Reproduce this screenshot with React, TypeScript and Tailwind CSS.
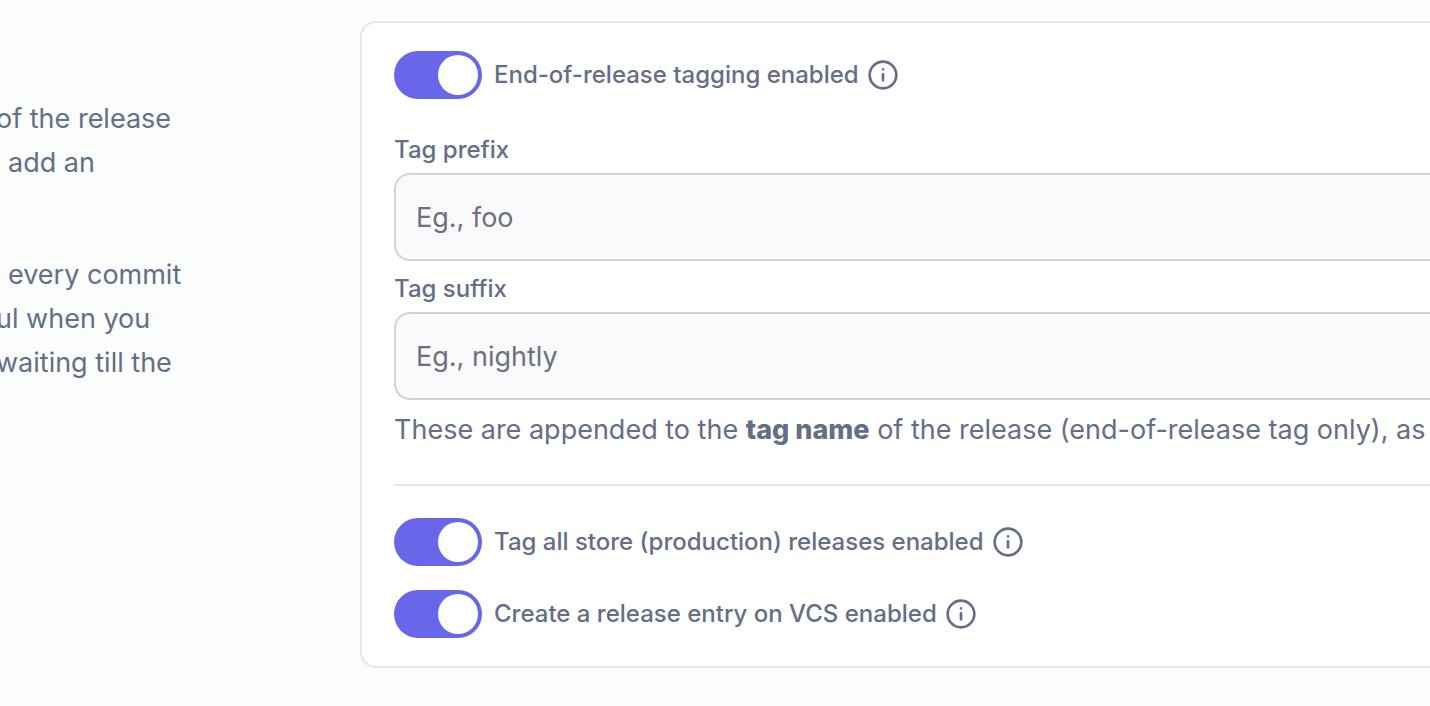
import { useId, type ReactNode } from "react";

function InfoIcon() {
  return (
    <svg viewBox="0 0 24 24" className="size-8" fill="none" stroke="currentColor" strokeWidth={2} strokeLinecap="round" strokeLinejoin="round" aria-hidden="true">
      <circle cx="12" cy="12" r="10" />
      <path d="M12 11.5v4.5M12 7.76l.01-.011" />
    </svg>
  );
}

function Toggle({ children }: { children: ReactNode }) {
  const id = useId();
  return (
    <div className="flex items-center">
      <input
        id={id}
        type="checkbox"
        defaultChecked
        className="flex h-12 w-22 shrink-0 cursor-pointer appearance-none items-center rounded-full bg-gray-200 p-1 before:size-10 before:rounded-full before:bg-white before:transition-transform checked:bg-[#6866e9] checked:before:translate-x-10"
      />
      <label htmlFor={id} className="mr-2 ml-3 text-2xl font-medium whitespace-nowrap">
        {children}
      </label>
      <button type="button" aria-label="More information">
        <InfoIcon />
      </button>
    </div>
  );
}

function Field({ label, placeholder }: { label: string; placeholder: string }) {
  const id = useId();
  return (
    <div className="flex flex-col gap-[7px]">
      <label htmlFor={id} className="text-2xl leading-8 font-medium">
        {label}
      </label>
      <input
        id={id}
        type="text"
        placeholder={placeholder}
        className="h-22 w-full rounded-l-2xl border-2 border-r-0 border-[#d1d3dc] bg-[#f9fafc] px-5 text-[27px] placeholder:text-[#6c717d]"
      />
    </div>
  );
}

export default function App() {
  return (
    <main className="flex min-h-screen items-start overflow-hidden bg-[#fbfdfc] font-['Inter',sans-serif] text-[#656e87]">
      <aside className="w-90 shrink-0 pt-[97px] text-[27px] leading-11 whitespace-nowrap">
        <p className="-ml-1">
          <span className="block">of the release</span>
          <span className="block pl-3">add an</span>
        </p>
        <p className="mt-17 -ml-1">
          <span className="block pl-3">every commit</span>
          <span className="block">ul when you</span>
          <span className="block">waiting till the</span>
        </p>
      </aside>
      <section className="mt-[21px] min-w-0 flex-1 overflow-hidden rounded-l-2xl border-2 border-r-0 border-gray-200 bg-white py-7 pl-8">
        <Toggle>End-of-release tagging enabled</Toggle>
        <div className="mt-[35px] flex flex-col gap-3">
          <Field label="Tag prefix" placeholder="Eg., foo" />
          <Field label="Tag suffix" placeholder="Eg., nightly" />
        </div>
        <p className="mt-2 text-[27px] leading-11 whitespace-nowrap">
          These are appended to the <strong className="font-extrabold">tag name</strong> of the release (end-of-release tag only), as
        </p>
        <hr className="my-8 border-t-2 border-gray-200" />
        <div className="flex flex-col gap-6">
          <Toggle>Tag all store (production) releases enabled</Toggle>
          <Toggle>Create a release entry on VCS enabled</Toggle>
        </div>
      </section>
    </main>
  );
}
